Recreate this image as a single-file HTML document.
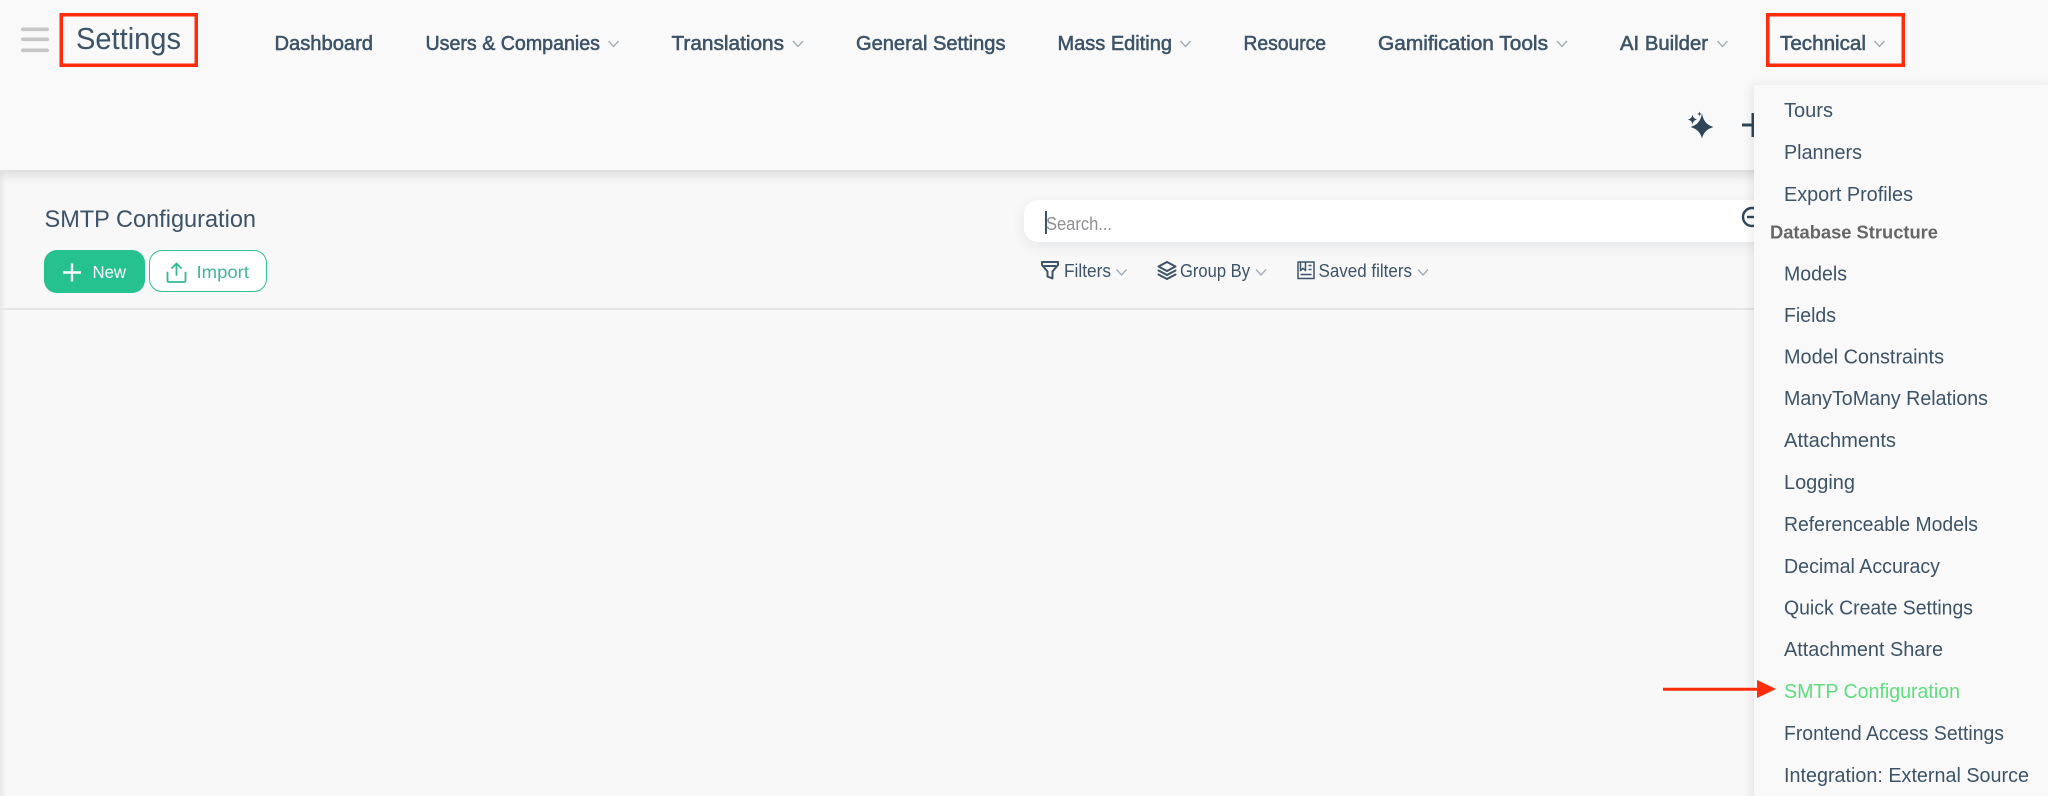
<!DOCTYPE html>
<html lang="en"><head><meta charset="utf-8"><title>SMTP Configuration</title>
<style>
html,body{margin:0;padding:0;width:2048px;height:796px;overflow:hidden;background:#f8f8f8}
body{position:relative;font-family:"Liberation Sans",sans-serif}
div,svg{position:absolute}
svg{left:0;top:0;overflow:hidden}
text{font-family:"Liberation Sans",sans-serif;fill:#3c5368}
.nav{font-size:20px;stroke:#3c5368;stroke-width:.55px}
.m{font-size:20.5px}
.tb{font-size:18.5px}
.chev{fill:none;stroke:#a3adb6;stroke-width:1.4}
.ic{fill:none;stroke:#3c5368;stroke-width:2;stroke-linejoin:round;stroke-linecap:round}
</style></head><body>
<div style="left:0;top:170px;width:6px;height:626px;background:linear-gradient(90deg,#e9e9e9,#f8f8f8)"></div>
<div style="left:0;top:0;width:2048px;height:170px;background:#f9f9f9;box-shadow:0 4px 12px rgba(0,0,0,.14)"></div>
<div style="left:0;top:308px;width:1760px;height:1.5px;background:#e6e6e6"></div>
<div style="left:44px;top:250px;width:101px;height:43px;background:#25c18e;border-radius:13px"></div>
<div style="left:149px;top:250px;width:116px;height:40px;background:#fff;border:1.5px solid #2fc196;border-radius:13px"></div>
<div style="left:1024px;top:200px;width:800px;height:42px;background:#fff;border-radius:14px;box-shadow:0 4px 14px rgba(40,60,80,.09)"></div>

<svg width="2048" height="796" viewBox="0 0 2048 796">
<g fill="#c6c6c6"><rect x="21" y="27.5" width="28" height="3.6" rx="1.8"/><rect x="21" y="37.5" width="28" height="3.6" rx="1.8"/><rect x="21" y="48.5" width="28" height="3.6" rx="1.8"/></g>
<text x="76" y="49" font-size="31" textLength="105" lengthAdjust="spacingAndGlyphs">Settings</text>

<g class="nav">
<text class="nav" x="274.500" y="50" textLength="98.500" lengthAdjust="spacingAndGlyphs">Dashboard</text>
<text class="nav" x="425.500" y="50" textLength="174.500" lengthAdjust="spacingAndGlyphs">Users &amp; Companies</text>
<text class="nav" x="671.500" y="50" textLength="112.500" lengthAdjust="spacingAndGlyphs">Translations</text>
<text class="nav" x="856" y="50" textLength="149.500" lengthAdjust="spacingAndGlyphs">General Settings</text>
<text class="nav" x="1057.500" y="50" textLength="114.500" lengthAdjust="spacingAndGlyphs">Mass Editing</text>
<text class="nav" x="1243.500" y="50" textLength="82.500" lengthAdjust="spacingAndGlyphs">Resource</text>
<text class="nav" x="1378" y="50" textLength="170" lengthAdjust="spacingAndGlyphs">Gamification Tools</text>
<text class="nav" x="1620" y="50" textLength="88" lengthAdjust="spacingAndGlyphs">AI Builder</text>
<text class="nav" x="1780" y="50" textLength="86" lengthAdjust="spacingAndGlyphs">Technical</text>
</g>
<g class="chev">
<path d="M608.500 41l5 5.500 5-5.500"/><path d="M793 41l5 5.500 5-5.500"/><path d="M1180.500 41l5 5.500 5-5.500"/><path d="M1557 41l5 5.500 5-5.500"/><path d="M1717.500 41l5 5.500 5-5.500"/><path d="M1874.500 41l5 5.500 5-5.500"/>
</g>

<rect x="61.250" y="14.750" width="135" height="50.500" fill="none" stroke="#ff2d0c" stroke-width="3.500"/>
<rect x="1767.750" y="14.750" width="135.500" height="50.500" fill="none" stroke="#ff2d0c" stroke-width="3.500"/>

<path fill="#2f4659" d="M1702 113.500c1.500 8 5 11.500 11.500 13.500-6.500 2-10 5.500-11.500 11.500-1.500-6-5-9.500-11.500-11.500 6.500-2 10-5.500 11.500-13.500z"/>
<path fill="#2f4659" d="M1692.500 114.500c.6 3 1.800 4.200 4.500 5-2.700.8-3.900 2-4.500 5-.6-3-1.800-4.200-4.500-5 2.700-.8 3.900-2 4.500-5z"/>
<path fill="#2f4659" d="M1699.500 111.500c.3 1.500.8 2 2.200 2.400-1.400.4-1.900.9-2.200 2.400-.3-1.500-.8-2-2.200-2.400 1.400-.4 1.900-.9 2.200-2.400z"/>
<path d="M1742 125h16M1753 113v24" stroke="#2f4659" stroke-width="3" fill="none"/>

<text x="44.500" y="227" font-size="24.500" textLength="211.500" lengthAdjust="spacingAndGlyphs">SMTP Configuration</text>
<path d="M63 272.500h18M72 263.500v18" stroke="#fff" stroke-width="2.400" fill="none"/>
<text x="92.500" y="278" font-size="17.500" style="fill:#fff" textLength="33.500" lengthAdjust="spacingAndGlyphs">New</text>
<path d="M167.500 272.500v8q0 1.500 1.500 1.500h15q1.500 0 1.500-1.500v-8M176.500 275v-11M172 268l4.500-4.500 4.500 4.500" fill="none" stroke="#34b994" stroke-width="1.800" stroke-linecap="round" stroke-linejoin="round"/>
<text x="196.500" y="278" font-size="17.500" style="fill:#40b898" textLength="52.500" lengthAdjust="spacingAndGlyphs">Import</text>

<text x="1046" y="230" font-size="18" style="fill:#8d8f92" textLength="66" lengthAdjust="spacingAndGlyphs">Search...</text>
<rect x="1045" y="211" width="2" height="23" fill="#3c5368"/>
<circle cx="1752" cy="217" r="9" fill="none" stroke="#2f4659" stroke-width="2.400"/>
<path d="M1747 217h12" stroke="#2f4659" stroke-width="2.400"/>

<path class="ic" d="M1042 262h16v3l-5.500 6.500v7l-5-2v-5l-5.500-6.500zM1044.500 266h11"/>
<text class="tb" x="1064" y="277" textLength="47" lengthAdjust="spacingAndGlyphs">Filters</text>
<path class="ic" stroke-width="1.800" d="M1167 262l8.500 4.500-8.500 4.500-8.500-4.500zM1158.500 270.500l8.500 4.500 8.500-4.500M1158.500 274.500l8.500 4.500 8.500-4.500"/>
<text class="tb" x="1180" y="277" textLength="70" lengthAdjust="spacingAndGlyphs">Group By</text>
<path d="M1298 262h16v16.500h-16zM1300.500 262v8.500l2.500-2.200 2.500 2.200V262M1308.500 265.500h3M1308.500 269.500h3M1300.500 274.500h11" fill="none" stroke="#3c5368" stroke-width="1.500" stroke-linejoin="round"/>
<text class="tb" x="1318.500" y="277" textLength="93.500" lengthAdjust="spacingAndGlyphs">Saved filters</text>
<g class="chev"><path d="M1116.500 269.500l5 5.500 5-5.500"/><path d="M1256 269.500l5 5.500 5-5.500"/><path d="M1418 269.500l5 5.500 5-5.500"/></g>
</svg>

<div style="left:1754px;top:85px;width:300px;height:720px;background:#f9f9f9;box-shadow:-3px 0 9px rgba(0,0,0,.08)"></div>

<svg width="2048" height="796" viewBox="0 0 2048 796">
<text class="m" x="1784" y="117" textLength="49" lengthAdjust="spacingAndGlyphs">Tours</text>
<text class="m" x="1784" y="159" textLength="78" lengthAdjust="spacingAndGlyphs">Planners</text>
<text class="m" x="1784" y="201" textLength="129" lengthAdjust="spacingAndGlyphs">Export Profiles</text>
<text x="1770" y="238.500" font-size="18.500" font-weight="700" style="fill:#666" textLength="168" lengthAdjust="spacingAndGlyphs">Database Structure</text>
<text class="m" x="1784" y="280.500" textLength="63" lengthAdjust="spacingAndGlyphs">Models</text>
<text class="m" x="1784" y="322" textLength="52" lengthAdjust="spacingAndGlyphs">Fields</text>
<text class="m" x="1784" y="363.500" textLength="160" lengthAdjust="spacingAndGlyphs">Model Constraints</text>
<text class="m" x="1784" y="405" textLength="204" lengthAdjust="spacingAndGlyphs">ManyToMany Relations</text>
<text class="m" x="1784" y="447" textLength="112" lengthAdjust="spacingAndGlyphs">Attachments</text>
<text class="m" x="1784" y="489" textLength="71" lengthAdjust="spacingAndGlyphs">Logging</text>
<text class="m" x="1784" y="531" textLength="194" lengthAdjust="spacingAndGlyphs">Referenceable Models</text>
<text class="m" x="1784" y="573" textLength="156" lengthAdjust="spacingAndGlyphs">Decimal Accuracy</text>
<text class="m" x="1784" y="614.500" textLength="189" lengthAdjust="spacingAndGlyphs">Quick Create Settings</text>
<text class="m" x="1784" y="656" textLength="159" lengthAdjust="spacingAndGlyphs">Attachment Share</text>
<text class="m" x="1784" y="698" style="fill:#5edd7e" textLength="176" lengthAdjust="spacingAndGlyphs">SMTP Configuration</text>
<text class="m" x="1784" y="740" textLength="220" lengthAdjust="spacingAndGlyphs">Frontend Access Settings</text>
<text class="m" x="1784" y="782" textLength="245" lengthAdjust="spacingAndGlyphs">Integration: External Source</text>
<path d="M1663 689.300h95" stroke="#ff2d0c" stroke-width="3" fill="none"/>
<path d="M1757 680l19 9-19 9z" fill="#ff2d0c"/>
</svg>
</body></html>
